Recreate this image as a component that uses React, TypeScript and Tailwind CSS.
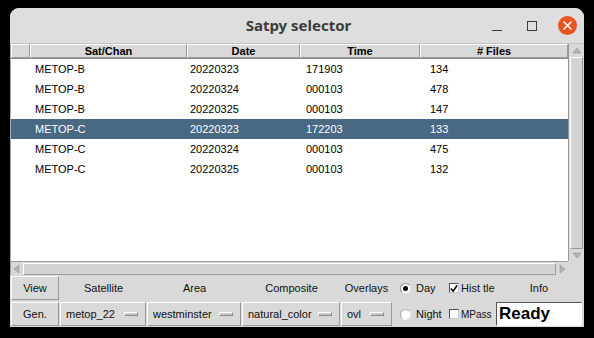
import React from 'react';

type Row = { sat: string; date: string; time: string; files: string };

const rows: Row[] = [
  { sat: 'METOP-B', date: '20220323', time: '171903', files: '134' },
  { sat: 'METOP-B', date: '20220324', time: '000103', files: '478' },
  { sat: 'METOP-B', date: '20220325', time: '000103', files: '147' },
  { sat: 'METOP-C', date: '20220323', time: '172203', files: '133' },
  { sat: 'METOP-C', date: '20220324', time: '000103', files: '475' },
  { sat: 'METOP-C', date: '20220325', time: '000103', files: '132' },
];

const SELECTED = 3;

// raised Tk-style bevel
const raised = 'border border-t-white border-l-white border-r-[#9a9a9a] border-b-[#9a9a9a]';

const Arrow = ({ dir }: { dir: 'up' | 'down' | 'left' | 'right' }) => {
  const pts = {
    up: '1,7 5,2 9,7',
    down: '1,3 5,8 9,3',
    left: '7,1 2,5 7,9',
    right: '3,1 8,5 3,9',
  }[dir];
  return (
    <svg width="10" height="10" viewBox="0 0 10 10">
      <polygon points={pts} fill="#b4b4b4" stroke="#8f8f8f" strokeWidth="0.5" />
    </svg>
  );
};

const OptionMenu = ({ label, w }: { label: string; w: string }) => (
  <div className={`${w} h-full flex items-center justify-between pl-[5px] pr-[7px] ${raised}`}>
    <span>{label}</span>
    <span className="w-[14px] h-[4px] bg-[#c8c8c8] border border-t-white border-l-white border-r-[#8a8a8a] border-b-[#8a8a8a]" />
  </div>
);

export default function App() {
  return (
    <div className="w-[594px] h-[338px] bg-black pt-[8px] pl-[10px] overflow-hidden font-['Liberation_Sans',Arial,sans-serif] text-[11px] text-black">
      <div className="w-[574px] h-[319px] bg-[#d9d9d9] rounded-t-[9px] overflow-hidden flex flex-col">
        {/* title bar */}
        <div className="h-[36px] shrink-0 grid grid-cols-[1fr_auto_1fr] items-center bg-[#dedede] border-b border-[#c2c2c2]">
          <div />
          <div className="font-['Noto_Sans',sans-serif] font-bold text-[15px] text-[#3c3c3c] pl-[3px]">Satpy selector</div>
          <div className="flex items-center justify-end pr-[7px]">
            <span className="w-[10px] h-[1px] bg-[#3c3c3c] mt-[9px]" />
            <span className="w-[10px] h-[10px] border border-[#3c3c3c] ml-[25px]" />
            <span className="w-[19px] h-[19px] rounded-full bg-[#e9541f] ml-[21px] flex items-center justify-center">
              <svg width="9" height="9" viewBox="0 0 9 9">
                <path d="M1 1 L8 8 M8 1 L1 8" stroke="white" strokeWidth="1.5" strokeLinecap="round" />
              </svg>
            </span>
          </div>
        </div>

        {/* table + vertical scrollbar */}
        <div className="h-[217px] shrink-0 flex border-l border-[#a8a8a8]">
          <div className="w-[557px] flex flex-col bg-white">
            <div className="h-[15px] flex bg-[#d9d9d9] font-bold border-b border-[#8c8c8c]">
              <div className={`w-[19px] ${raised}`} />
              <div className={`w-[157px] text-center leading-[13px] ${raised}`}>Sat/Chan</div>
              <div className={`w-[113px] text-center leading-[13px] ${raised}`}>Date</div>
              <div className={`w-[120px] text-center leading-[13px] ${raised}`}>Time</div>
              <div className={`w-[148px] text-center leading-[13px] ${raised}`}># Files</div>
            </div>
            {rows.map((r, i) => (
              <div
                key={i}
                className={`h-[20px] flex items-center pt-[1px] ${i === SELECTED ? 'bg-[#486884] text-white' : ''}`}
              >
                <div className="w-[19px]" />
                <div className="w-[157px] pl-[5px]">{r.sat}</div>
                <div className="w-[113px] pl-[3px]">{r.date}</div>
                <div className="w-[120px] pl-[6px]">{r.time}</div>
                <div className="w-[148px] pl-[10px]">{r.files}</div>
              </div>
            ))}
          </div>
          <div className="w-[16px] flex flex-col bg-[#d9d9d9] border-l border-[#9a9a9a] px-[1px] pt-[1px]">
            <div className="h-[12px] flex items-center justify-center">
              <Arrow dir="up" />
            </div>
            <div className={`flex-1 bg-[#d4d4d4] ${raised}`} />
            <div className="h-[12px] flex items-center justify-center">
              <Arrow dir="down" />
            </div>
          </div>
        </div>

        {/* horizontal scrollbar */}
        <div className="h-[14px] shrink-0 flex items-center border-t border-l border-[#9a9a9a] w-[558px] bg-[#d9d9d9]">
          <div className="w-[12px] flex justify-center">
            <Arrow dir="left" />
          </div>
          <div className={`flex-1 h-[12px] bg-[#d4d4d4] ${raised}`} />
          <div className="w-[12px] flex justify-center">
            <Arrow dir="right" />
          </div>
        </div>

        {/* controls */}
        <div className="flex-1 flex flex-col gap-[2px] pt-[1px] pl-[1px] text-[#111]">
          <div className="h-[24px] flex items-center">
            <div className={`w-[48px] h-full flex items-center justify-center ${raised}`}>View</div>
            <div className="w-[87px] text-center ml-[1px]">Satellite</div>
            <div className="w-[95px] text-center">Area</div>
            <div className="w-[99px] text-center">Composite</div>
            <div className="w-[51px] text-center">Overlays</div>
            <div className="w-[54px] flex items-center pl-[8px] gap-[5px]">
              <span className="w-[11px] h-[11px] rounded-full bg-white border border-t-[#8a8a8a] border-l-[#8a8a8a] border-r-[#e8e8e8] border-b-[#e8e8e8] flex items-center justify-center">
                <span className="w-[5px] h-[5px] rounded-full bg-black" />
              </span>
              <span>Day</span>
            </div>
            <div className="w-[50px] flex items-center pl-[3px] gap-[2px]">
              <span className="w-[10px] h-[10px] bg-white border border-t-[#555] border-l-[#555] border-r-[#ccc] border-b-[#ccc] flex items-center justify-center">
                <svg width="9" height="9" viewBox="0 0 9 9">
                  <path d="M1 4.5 L3.5 7.5 L8 1" stroke="black" strokeWidth="1.8" fill="none" />
                </svg>
              </span>
              <span>Hist tle</span>
            </div>
            <div className="w-[86px] text-center">Info</div>
          </div>
          <div className="h-[24px] flex items-center">
            <div className={`w-[48px] h-full flex items-center justify-center ${raised}`}>Gen.</div>
            <div className="h-full ml-[1px] flex gap-[1px]">
              <OptionMenu label="metop_22" w="w-[86px]" />
              <OptionMenu label="westminster" w="w-[94px]" />
              <OptionMenu label="natural_color" w="w-[98px]" />
              <OptionMenu label="ovl" w="w-[51px]" />
            </div>
            <div className="w-[54px] flex items-center pl-[8px] gap-[5px]">
              <span className="w-[11px] h-[11px] rounded-full bg-white border border-t-[#a8a8a8] border-l-[#a8a8a8] border-r-[#f0f0f0] border-b-[#f0f0f0]" />
              <span>Night</span>
            </div>
            <div className="w-[50px] flex items-center pl-[3px] gap-[2px]">
              <span className="w-[10px] h-[10px] bg-white border border-t-[#555] border-l-[#555] border-r-[#ccc] border-b-[#ccc]" />
              <span className="text-[10px]">MPass</span>
            </div>
            <div className="w-[86px] h-full bg-white border border-t-[#555] border-l-[#555] border-r-white border-b-white flex items-center pl-[2px] font-bold text-[17px] text-black">
              Ready
            </div>
          </div>
        </div>
      </div>
    </div>
  );
}
